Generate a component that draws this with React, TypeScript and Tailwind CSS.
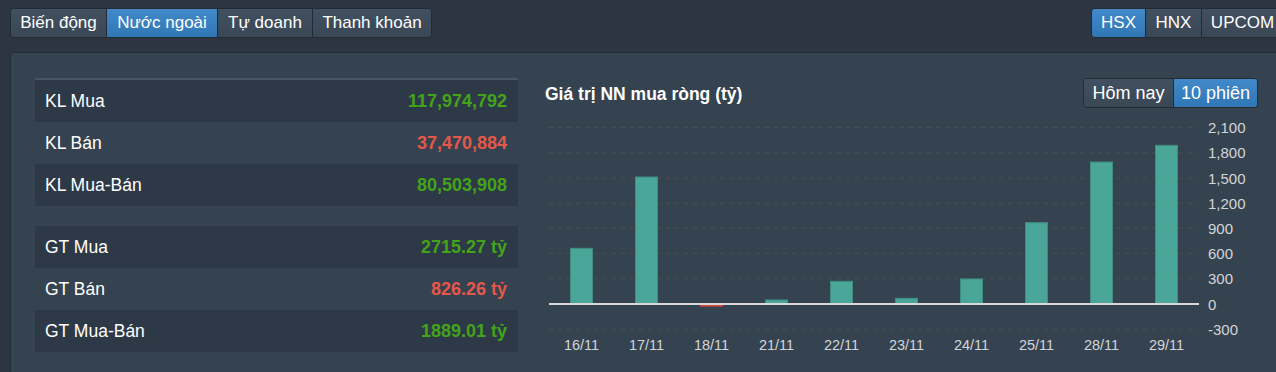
import React from "react";

const font = { fontFamily: '"Liberation Sans", Arial, sans-serif' };

function TabGroup({ items, widths, active, size }: { items: string[]; widths: string[]; active: number; size: string }) {
  return (
    <div className="flex h-[30px] rounded-[4px] border border-[#232c35] overflow-hidden">
      {items.map((t, i) => (
        <div
          key={t}
          className={
            "flex shrink-0 items-center justify-center whitespace-nowrap text-white " +
            widths[i] +
            " " +
            size +
            (i > 0 ? " border-l border-[#232c35]" : "") +
            (i === active
              ? " bg-gradient-to-b from-[#4189c9] to-[#3177b6]"
              : " bg-gradient-to-b from-[#415060] to-[#3a4755]")
          }
        >
          {t}
        </div>
      ))}
    </div>
  );
}

function Row({ label, value, color, dark }: { label: string; value: string; color: string; dark: boolean }) {
  return (
    <div className={"flex h-[42px] items-center justify-between pl-[10px] pr-[11px] " + (dark ? "bg-[#2e3947]" : "")}>
      <span className="text-[17.5px] text-white">{label}</span>
      <span className={"text-[18px] font-bold " + color}>{value}</span>
    </div>
  );
}

const G = "text-[#43a319]";
const R = "text-[#e4574b]";

const dates = ["16/11", "17/11", "18/11", "21/11", "22/11", "23/11", "24/11", "25/11", "28/11", "29/11"];
const vals = [663, 1512, -25, 48, 270, 68, 298, 968, 1690, 1889];
const ticks = [2100, 1800, 1500, 1200, 900, 600, 300, 0, -300];

function Chart() {
  const zero = 194;
  const k = 25.2 / 300;
  return (
    <svg width={713} height={250} className="block">
      {ticks.map((t) => {
        const y = zero - t * k;
        return (
          <g key={t}>
            {t !== 0 && (
              <line x1={4} x2={654} y1={y} y2={y} stroke="#4a4f54" strokeWidth={1} strokeDasharray="4 5" />
            )}
            <text x={663} y={y + 5.5} fontSize={15} fill="#d3d6d9" style={font}>
              {t.toLocaleString("en-US")}
            </text>
          </g>
        );
      })}
      {vals.map((v, i) => {
        const x = 25 + i * 65;
        const h = Math.abs(v) * k;
        const y = v >= 0 ? zero - h : zero;
        return (
          <rect
            key={i}
            x={x + 0.5}
            y={y}
            width={22}
            height={h}
            fill={v >= 0 ? "#4aa699" : "#e0504a"}
            stroke={v >= 0 ? "#3e8d82" : "#c8433e"}
            strokeWidth={1}
          />
        );
      })}
      <line x1={4} x2={654} y1={zero} y2={zero} stroke="#d8d8d8" strokeWidth={2} />
      {dates.map((d, i) => (
        <text key={d} x={36.5 + i * 65} y={240} fontSize={14.5} fill="#d3d6d9" textAnchor="middle" style={font}>
          {d}
        </text>
      ))}
    </svg>
  );
}

export default function App() {
  return (
    <div className="w-[1276px] h-[372px] overflow-hidden bg-[#2c3541]" style={font}>
      <div className="w-[1300px] px-[10px] pt-[8px]">
        <div className="flex justify-between pr-[6px]">
          <TabGroup
            items={["Biến động", "Nước ngoài", "Tự doanh", "Thanh khoản"]}
            widths={["w-[95px]", "w-[111px]", "w-[95px]", "w-[119px]"]}
            active={1}
            size="text-[17px]"
          />
          <TabGroup
            items={["HSX", "HNX", "UPCOM"]}
            widths={["w-[53px]", "w-[56px]", "w-[82px]"]}
            active={0}
            size="text-[17px]"
          />
        </div>
        <div className="mt-[14px] h-[340px] rounded-[4px] border border-[#242d37] bg-[#35424f] flex pl-[24px] pt-[25px]">
          <div className="w-[483px] flex flex-col">
            <div className="border-t-2 border-[#4a5564]">
              <Row label="KL Mua" value="117,974,792" color={G} dark />
              <Row label="KL Bán" value="37,470,884" color={R} dark={false} />
              <Row label="KL Mua-Bán" value="80,503,908" color={G} dark />
            </div>
            <div className="mt-[20px]">
              <Row label="GT Mua" value="2715.27 tỷ" color={G} dark />
              <Row label="GT Bán" value="826.26 tỷ" color={R} dark={false} />
              <Row label="GT Mua-Bán" value="1889.01 tỷ" color={G} dark />
            </div>
          </div>
          <div className="ml-[27px] w-[713px] flex flex-col">
            <div className="flex h-[30px] items-center justify-between">
              <span className="pt-[3px] text-[17.5px] font-bold text-white">Giá trị NN mua ròng (tỷ)</span>
              <TabGroup items={["Hôm nay", "10 phiên"]} widths={["w-[89px]", "w-[84px]"]} active={1} size="text-[18px]" />
            </div>
            <div className="mt-[2px]">
              <Chart />
            </div>
          </div>
        </div>
      </div>
    </div>
  );
}
